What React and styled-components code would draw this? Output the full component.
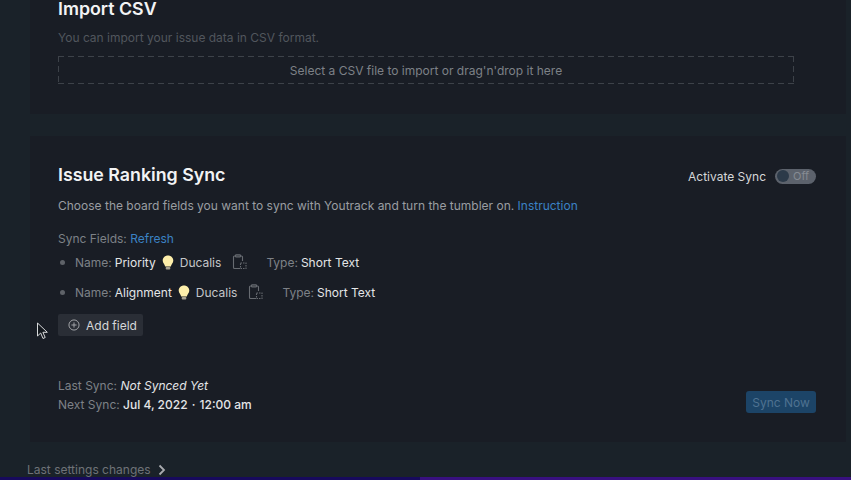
import styled, { createGlobalStyle } from "styled-components";

const GlobalStyle = createGlobalStyle`
  html, body {
    margin: 0;
    padding: 0;
    background: #1a2229;
  }
  body {
    font-family: "Inter", "Liberation Sans", sans-serif;
    overflow: hidden;
  }
`;

const Page = styled.div`
  width: 851px;
  height: 480px;
  overflow: hidden;
  display: flex;
  flex-direction: column;
  background: #1a2229;
`;

const Content = styled.div`
  flex: 1;
  min-height: 0;
  padding-left: 30px;
  padding-right: 5px;
  display: flex;
  flex-direction: column;
  gap: 22px;
`;

const Panel = styled.section`
  flex-shrink: 0;
  background: #191d25;
  padding: 0 30px 0 28px;
  box-sizing: border-box;
  height: ${(p) => p.$height}px;
  display: flex;
  flex-direction: column;
`;

const Title = styled.h2`
  margin: 0;
  font-size: 17.8px;
  line-height: 18px;
  font-weight: 600;
  color: #f2f3f4;
`;

const Hint = styled.p`
  margin: 11px 0 0;
  font-size: 12px;
  line-height: 18px;
  color: #51565d;
`;

const DropZone = styled.div`
  margin: 9px 22px 0 0;
  height: 28px;
  display: flex;
  align-items: center;
  justify-content: center;
  font-size: 12px;
  color: #7d8187;
  background-image:
    repeating-linear-gradient(to right, #3d4249 0 6px, transparent 6px 10px),
    repeating-linear-gradient(to right, #3d4249 0 6px, transparent 6px 10px),
    repeating-linear-gradient(to bottom, #3d4249 0 6px, transparent 6px 10px),
    repeating-linear-gradient(to bottom, #3d4249 0 6px, transparent 6px 10px);
  background-size: 100% 1px, 100% 1px, 1px 100%, 1px 100%;
  background-position: top, bottom, left, right;
  background-repeat: no-repeat;
`;

const HeaderRow = styled.div`
  display: flex;
  align-items: center;
  justify-content: space-between;
  margin-top: 30px;
`;

const ToggleLabel = styled.label`
  display: flex;
  align-items: center;
  gap: 9px;
  margin-top: 2px;
  font-size: 12px;
  color: #d5d7d9;
`;

const Toggle = styled.span`
  width: 41px;
  height: 15px;
  border-radius: 8px;
  background: #5c626c;
  display: flex;
  align-items: center;
  padding: 0 2px;
  box-sizing: border-box;
  gap: 4px;
  font-size: 11px;
  color: #868b93;
`;

const Knob = styled.span`
  width: 12px;
  height: 12px;
  border-radius: 50%;
  background: #2c3a49;
`;

const Description = styled.p`
  margin: 13px 0 0;
  font-size: 12px;
  line-height: 18px;
  color: #9a9da2;
`;

const LinkText = styled.a`
  color: #3b82c4;
`;

const FieldsHeading = styled.div`
  margin-top: 15px;
  font-size: 12px;
  line-height: 18px;
  color: #7d8187;
`;

const FieldList = styled.ul`
  list-style: none;
  margin: -1px 0 0;
  padding: 0;
  display: flex;
  flex-direction: column;
`;

const FieldRow = styled.li`
  height: 30px;
  display: flex;
  align-items: center;
  font-size: 12px;
  color: #e4e5e7;
`;

const Bullet = styled.span`
  width: 5px;
  height: 5px;
  border-radius: 50%;
  background: #5e6268;
  margin: 0 10px 0 2px;
`;

const Muted = styled.span`
  color: #7d8187;
  margin-right: 3px;
`;

const Ducalis = styled.span`
  color: #c5c7c9;
`;

const CopyButton = styled.span`
  display: flex;
  margin: 0 19px 0 11px;
  color: #676b71;
`;

const BulbIcon = styled.svg`
  margin: 0 6px 0 6px;
`;

const AddButton = styled.button`
  align-self: flex-start;
  margin-top: 7px;
  height: 22px;
  width: 85px;
  padding: 0 0 0 10px;
  border: 0;
  border-radius: 2px;
  background: #2a2e36;
  color: #d5d7d9;
  font: inherit;
  font-size: 12px;
  display: flex;
  align-items: center;
  gap: 6px;
`;

const Footer = styled.div`
  margin-top: 40px;
  display: flex;
  justify-content: space-between;
  align-items: flex-end;
`;

const SyncInfo = styled.div`
  font-size: 12px;
  line-height: 19px;
  color: #7d8187;
`;

const Strong = styled.span`
  color: #e4e5e7;
  font-weight: ${(p) => (p.$italic ? 400 : 500)};
  font-style: ${(p) => (p.$italic ? "italic" : "normal")};
`;

const DateDot = styled.span`
  margin: 0 1px;
`;

const SyncButton = styled.button`
  width: 70px;
  height: 22px;
  margin-bottom: 1px;
  padding: 0;
  border: 0;
  border-radius: 3px;
  background: #1c4467;
  color: #4f7291;
  font: inherit;
  font-size: 12px;
`;

const ChangesLink = styled.div`
  margin: -2px 0 0 -3px;
  display: flex;
  align-items: center;
  gap: 7px;
  font-size: 12px;
  color: #6f7378;
`;

const BottomBar = styled.div`
  height: 3px;
  flex-shrink: 0;
  background: linear-gradient(to right, #170a5c 0, #170a5c 420px, #38107f 420px);
`;

const Cursor = styled.svg`
  position: absolute;
  left: 36px;
  top: 322px;
`;

const Bulb = () => (
  <BulbIcon width="12" height="15" viewBox="0 0 12 15">
    <path d="M6 0.500c3 0 5.300 2.200 5.300 5 0 2.600-2 3.600-2.500 6H3.200C2.700 9.100 0.700 8.100 0.700 5.500 0.700 2.700 3 0.500 6 0.500z" fill="#fdeeaa" />
    <rect x="3.700" y="12" width="4.600" height="2.600" rx="1" fill="#a9a392" />
  </BulbIcon>
);

const CopyIcon = () => (
  <svg width="15" height="16" viewBox="0 0 15 16" fill="none" stroke="currentColor" strokeWidth="1.100">
    <path d="M8 14.500H2.500a1 1 0 0 1-1-1V3a1 1 0 0 1 1-1h7a1 1 0 0 1 1 1v4" />
    <rect x="3.500" y="0.700" width="5" height="2.300" rx="0.800" />
    <rect x="8.500" y="9" width="5.500" height="5.500" strokeDasharray="1.500 1" />
  </svg>
);

const PlusCircle = () => (
  <svg width="12" height="12" viewBox="0 0 13 13" fill="none" stroke="#a9abaf" strokeWidth="1">
    <circle cx="6.500" cy="6.500" r="5.500" />
    <path d="M6.500 3.700v5.600M3.700 6.500h5.600" />
  </svg>
);

const Chevron = () => (
  <svg width="8" height="12" viewBox="0 0 8 12" fill="none" stroke="#a9abaf" strokeWidth="1.800">
    <path d="M1.500 1.500 6 6l-4.500 4.500" />
  </svg>
);

const fields = [
  { name: "Priority", type: "Short Text" },
  { name: "Alignment", type: "Short Text" },
];

export default function App() {
  return (
    <Page>
      <GlobalStyle />
      <Content>
        <Panel $height={114}>
          <Title>Import CSV</Title>
          <Hint>You can import your issue data in CSV format.</Hint>
          <DropZone>Select a CSV file to import or drag'n'drop it here</DropZone>
        </Panel>
        <Panel $height={306}>
          <HeaderRow>
            <Title>Issue Ranking Sync</Title>
            <ToggleLabel>
              Activate Sync
              <Toggle>
                <Knob />
                Off
              </Toggle>
            </ToggleLabel>
          </HeaderRow>
          <Description>
            Choose the board fields you want to sync with Youtrack and turn the tumbler on.{" "}
            <LinkText>Instruction</LinkText>
          </Description>
          <FieldsHeading>
            Sync Fields: <LinkText>Refresh</LinkText>
          </FieldsHeading>
          <FieldList>
            {fields.map((field) => (
              <FieldRow key={field.name}>
                <Bullet />
                <Muted>Name:</Muted>
                {field.name}
                <Bulb />
                <Ducalis>Ducalis</Ducalis>
                <CopyButton>
                  <CopyIcon />
                </CopyButton>
                <Muted>Type:</Muted>
                {field.type}
              </FieldRow>
            ))}
          </FieldList>
          <AddButton>
            <PlusCircle />
            Add field
          </AddButton>
          <Footer>
            <SyncInfo>
              <div>
                Last Sync: <Strong $italic>Not Synced Yet</Strong>
              </div>
              <div>
                Next Sync: <Strong>Jul 4, 2022 <DateDot>·</DateDot> 12:00 am</Strong>
              </div>
            </SyncInfo>
            <SyncButton>Sync Now</SyncButton>
          </Footer>
        </Panel>
        <ChangesLink>
          Last settings changes
          <Chevron />
        </ChangesLink>
      </Content>
      <BottomBar />
      <Cursor width="13" height="18" viewBox="0 0 13 18">
        <path d="M1.500 1v13l3.200-3 2.300 5.500 2.200-1-2.300-5.200h4.400z" fill="#14181e" stroke="#d8d9db" strokeWidth="1" />
      </Cursor>
    </Page>
  );
}
